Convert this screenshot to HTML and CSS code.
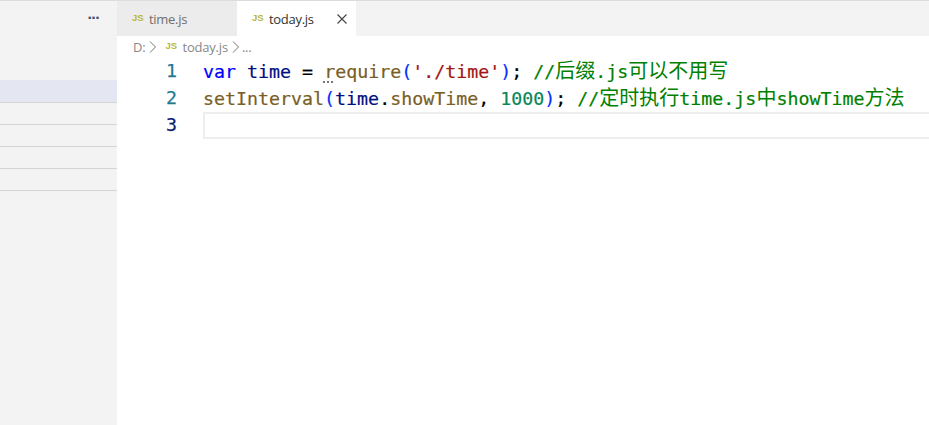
FILE: index.html
```html
<!DOCTYPE html>
<html lang="zh">
<head>
<meta charset="utf-8">
<title>today.js</title>
<link rel="stylesheet" href="styles.css">
</head>
<body>
<div class="app">
  <aside class="sidebar">
    <div class="side-head"><span class="more">···</span></div>
    <div class="side-spacer"></div>
    <div class="side-row active"></div>
    <div class="side-row"></div>
    <div class="side-row"></div>
    <div class="side-row"></div>
    <div class="side-row"></div>
  </aside>
  <main class="editor">
    <div class="tabs">
      <div class="tab inactive"><span class="js">JS</span><span class="tab-name">time.js</span></div>
      <div class="tab current"><span class="js">JS</span><span class="tab-name">today.js</span>
        <svg class="close" width="16" height="16" viewBox="0 0 16 16"><path d="M3.5 3.5l9 9M12.5 3.5l-9 9" stroke="#424242" stroke-width="1.1" fill="none"/></svg>
      </div>
    </div>
    <div class="crumbs">
      <span>D:</span>
      <svg class="chev" width="10" height="16" viewBox="0 0 10 16"><path d="M2 2.5l5.5 5.5-5.5 5.5" stroke="#777" stroke-width="1" fill="none"/></svg>
      <span class="js crumb-js">JS</span><span>today.js</span>
      <svg class="chev" width="10" height="16" viewBox="0 0 10 16"><path d="M2 2.5l5.5 5.5-5.5 5.5" stroke="#777" stroke-width="1" fill="none"/></svg>
      <span>...</span>
    </div>
    <div class="code">
      <div class="line"><span class="num n1">1</span><span class="src"><span class="kw">var</span> <span class="var">time</span> <span class="op">=</span> <span class="fn req">require<span class="hint"></span></span><span class="par">(</span><span class="str">'./time'</span><span class="par">)</span><span class="op">;</span> <span class="com">//<span class="han">后缀</span>.js<span class="han">可以不用写</span></span></span></div>
      <div class="line"><span class="num n2">2</span><span class="src"><span class="fn">setInterval</span><span class="par">(</span><span class="var">time</span><span class="op">.</span><span class="fn">showTime</span><span class="op">,</span> <span class="lit">1000</span><span class="par">)</span><span class="op">;</span> <span class="com">//<span class="han">定时执行</span>time.js<span class="han">中</span>showTime<span class="han">方法</span></span></span></div>
      <div class="line"><span class="num n3">3</span><span class="src cursor-line"></span></div>
    </div>
  </main>
</div>
</body>
</html>
```
FILE: styles.css
```css
* { box-sizing: border-box; }
html, body { margin: 0; height: 100%; background: #fff; overflow: hidden; }
.app { display: flex; height: 425px; border-top: 1px solid #dcdcdc; font-family: "Open Sans", "Noto Sans", sans-serif; }
.sidebar { width: 117px; flex: none; background: #f3f3f3; }
.side-head { height: 35px; display: flex; justify-content: flex-end; align-items: center; padding-right: 18px; }
.more { color: #424e75; font: bold 13px/1 "DejaVu Sans", sans-serif; letter-spacing: -1px; margin-top: -2px; }
.side-spacer { height: 44px; }
.side-row { height: 22px; border-bottom: 1px solid #d4d4d4; }
.side-row.active { background: #e4e6f1; height: 23px; }
.editor { flex: 1; min-width: 0; display: flex; flex-direction: column; }
.tabs { display: flex; height: 35px; background: #f3f3f3; }
.tab { display: flex; align-items: center; height: 35px; font-size: 13px; letter-spacing: -.3px; color: #333; }
.tab.inactive { width: 120px; background: #ececec; padding-left: 15px; color: #6f6f6f; }
.tab.current { width: 119px; background: #fff; padding-left: 15px; }
.js { flex: none; color: #b7b73b; font: bold 9.5px/1 "Liberation Sans", sans-serif; width: 17px; letter-spacing: 0; margin-top: -2px; }
.tab-name { flex: 1; }
.close { margin-right: 6px; }
.crumbs { display: flex; align-items: center; height: 22px; padding-left: 16px; font-size: 13px; letter-spacing: -.2px; color: #888; }
.chev { margin: 0 1px 0 3px; }
.crumb-js { margin-left: 6px; width: 17px; }
.code { font: 18.3px/23px "DejaVu Sans Mono", "Noto Sans CJK SC", monospace; }
.line { display: flex; height: 27px; }
.num { width: 60px; padding-top: 1px; text-align: right; -webkit-text-stroke: .25px; }
.src { margin-left: 26px; flex: 1; white-space: pre; -webkit-text-stroke: .2px; }
.n1, .n2 { color: #237893; }
.n3 { color: #0b216f; }
.cursor-line { border: 2px solid #eeeeee; border-right: 0; height: 27px; }
.kw { color: #0000ff; }
.var { color: #001080; }
.op { color: #000; }
.fn { color: #795e26; }
.req { position: relative; }
.hint { position: absolute; left: -1px; bottom: -1px; width: 10px; height: 2px; background: repeating-linear-gradient(90deg, #777 0 2px, transparent 2px 4px); }
.par { color: #0431fa; }
.str { color: #a31515; }
.lit { color: #098658; }
.com { color: #008000; }
.han { font: 20px/23px "Noto Sans CJK SC", sans-serif; -webkit-text-stroke: 0; }
```
